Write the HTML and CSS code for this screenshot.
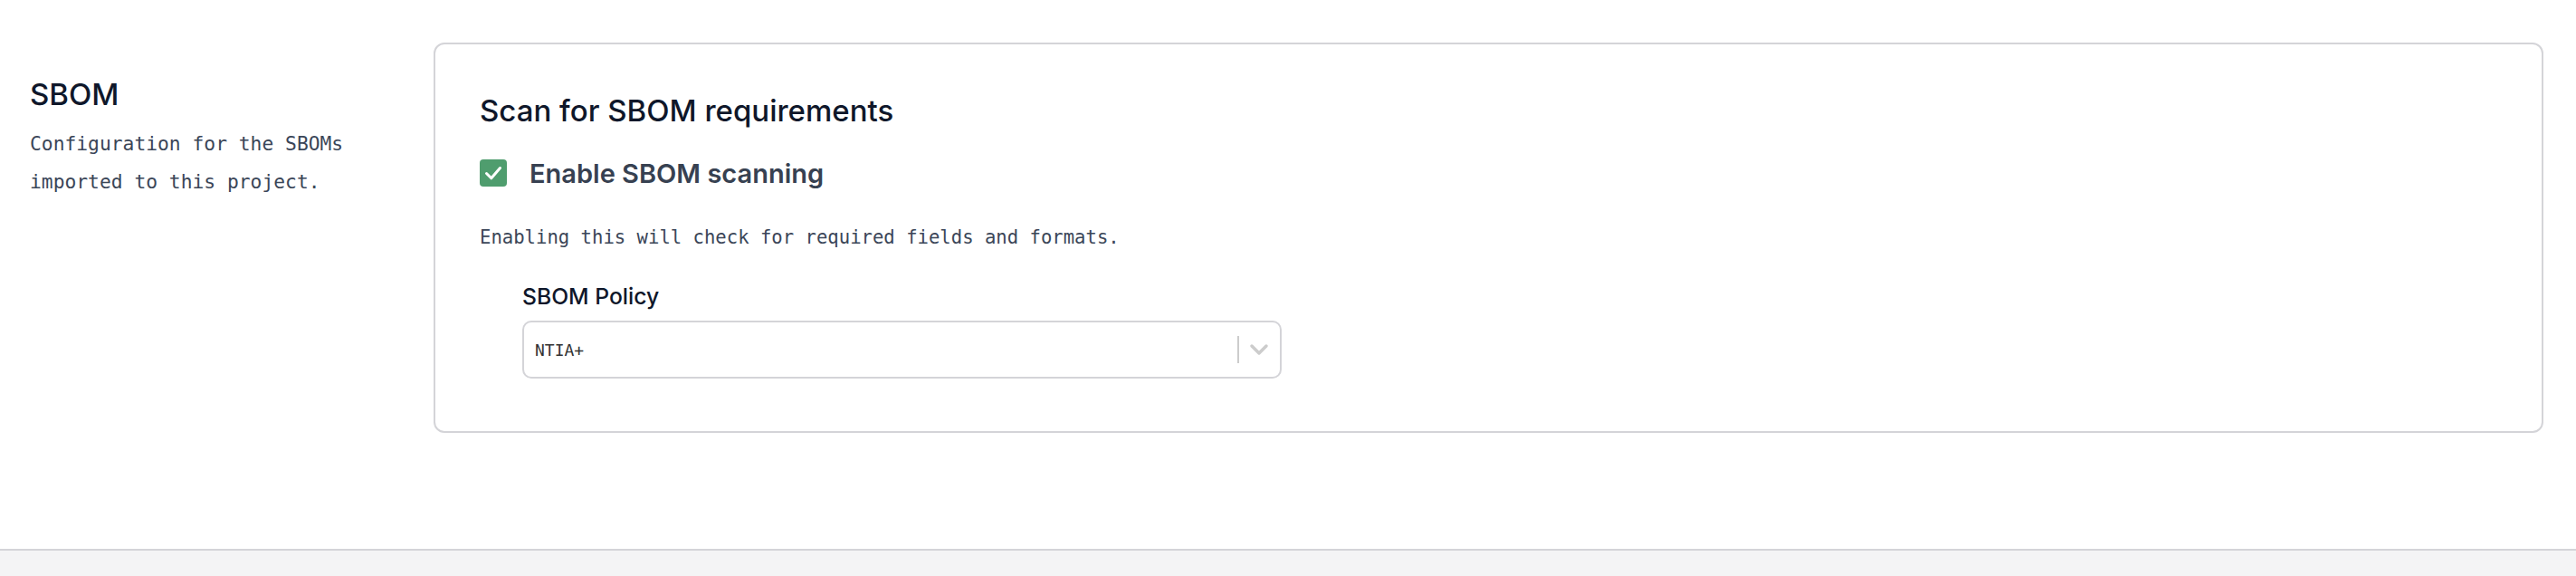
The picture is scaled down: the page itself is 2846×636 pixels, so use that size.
FILE: index.html
```html
<!DOCTYPE html>
<html lang="en">
<head>
  <meta charset="UTF-8">
  <meta name="viewport" content="width=device-width, initial-scale=1.0">
  <title>SBOM settings</title>
  <link rel="stylesheet" href="styles.css">
</head>
<body>
  <main class="page">
    <section class="settings-row">
      <div class="settings-intro">
        <h2>SBOM</h2>
        <p>Configuration for the SBOMs imported to this project.</p>
      </div>
      <div class="card">
        <h3>Scan for SBOM requirements</h3>
        <label class="check-row">
          <span class="checkbox">
            <svg width="30" height="30" viewBox="0 0 30 30">
              <rect width="30" height="30" rx="4" fill="#4f9d6e"/>
              <path d="M7.5 15.5 L12.8 20.8 L22.5 9.5" fill="none" stroke="#fff" stroke-width="3" stroke-linecap="round" stroke-linejoin="round"/>
            </svg>
          </span>
          <span>Enable SBOM scanning</span>
        </label>
        <p class="hint">Enabling this will check for required fields and formats.</p>
        <div class="field">
          <div class="field-label">SBOM Policy</div>
          <div class="select">
            <span class="select-value">NTIA+</span>
            <span class="select-sep"></span>
            <svg class="chevron" width="22" height="14" viewBox="0 0 22 14">
              <path d="M3 3 L11 11 L19 3" fill="none" stroke="#cccccc" stroke-width="3.5" stroke-linecap="round" stroke-linejoin="round"/>
            </svg>
          </div>
        </div>
      </div>
    </section>
  </main>
  <footer class="footer"></footer>
</body>
</html>
```

FILE: styles.css
```css
body {
  margin: 0;
  font-family: Inter, "Noto Sans", sans-serif;
  color: #0f172a;
  background-color: #fff;
}
.page {
  height: 606px;
  box-sizing: border-box;
  padding: 47px 36px 0 33px;
}
.settings-row {
  display: flex;
}
.settings-intro {
  width: 446px;
  flex: none;
  padding-top: 37px;
}
.settings-intro h2 {
  margin: 0;
  font-size: 33px;
  line-height: 40px;
  font-weight: 500;
  color: #0f172a;
}
.settings-intro p {
  margin: 14px 0 0;
  max-width: 395px;
  font-family: "DejaVu Sans Mono", "Liberation Mono", monospace;
  font-size: 21.3px;
  line-height: 42px;
  color: #3b4658;
}
.card {
  flex: 1;
  border: 2px solid #d4d4d8;
  border-radius: 12px;
  padding: 52px 48px 58px 49px;
}
.card h3 {
  margin: 0;
  font-size: 33px;
  line-height: 42px;
  font-weight: 500;
  color: #0f172a;
}
.check-row {
  display: flex;
  align-items: center;
  gap: 25px;
  margin-top: 32px;
  height: 32px;
  font-size: 29px;
  font-weight: 600;
  color: #374151;
}
.checkbox {
  display: flex;
}
.hint {
  margin: 39px 0 0;
  font-family: "DejaVu Sans Mono", "Liberation Mono", monospace;
  font-size: 20.6px;
  line-height: 32px;
  color: #3b4658;
}
.field {
  margin-top: 33px;
  padding-left: 47px;
}
.field-label {
  font-size: 24.7px;
  line-height: 32px;
  font-weight: 500;
  color: #0f172a;
}
.select {
  margin-top: 11px;
  width: 839px;
  height: 64px;
  box-sizing: border-box;
  border: 2px solid #d4d4d8;
  border-radius: 10px;
  display: flex;
  align-items: center;
  padding: 0 12px 0 12px;
}
.select-value {
  flex: 1;
  font-family: "DejaVu Sans Mono", "Liberation Mono", monospace;
  font-size: 18px;
  color: #333;
}
.select-sep {
  width: 2px;
  height: 30px;
  background-color: #cccccc;
  margin-right: 11px;
}
.footer {
  height: 28px;
  border-top: 2px solid #d4d4d8;
  background-color: #f4f4f5;
}
```
